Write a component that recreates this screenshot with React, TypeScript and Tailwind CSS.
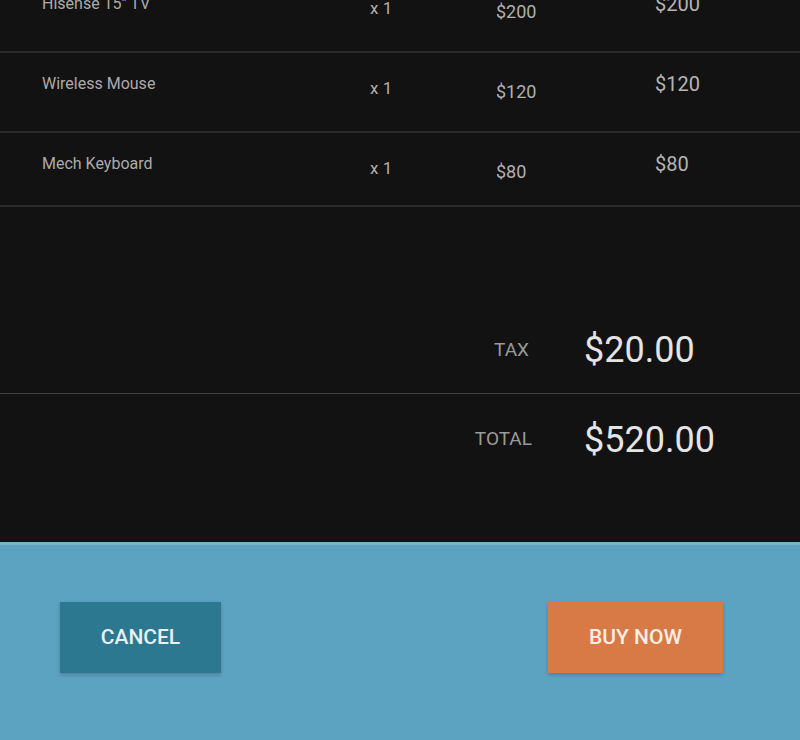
import React from "react";

const items = [
  { name: 'Hisense 15" TV', qty: "x 1", price: "$200", total: "$200", h: "h-[80px]" },
  { name: "Wireless Mouse", qty: "x 1", price: "$120", total: "$120", h: "h-[80px]" },
  { name: "Mech Keyboard", qty: "x 1", price: "$80", total: "$80", h: "h-[74px]" },
];

export default function App() {
  return (
    <div
      className="w-[800px] h-[740px] overflow-hidden flex flex-col bg-[#121212]"
      style={{ fontFamily: "Roboto, 'Noto Sans', sans-serif" }}
    >
      <div className="flex-1 flex flex-col">
        <div className="-mt-[27px] flex flex-col">
          {items.map((it) => (
            <div
              key={it.name}
              className={`flex items-start ${it.h} border-b-2 border-[#2a2a2a] shrink-0`}
            >
              <div className="w-[370px] pl-[42px] pt-[19px] text-[16px] leading-[24px] text-[#ababab]">
                {it.name}
              </div>
              <div className="w-[126px] pt-[23px] text-[17px] leading-[24px] text-[#b0b0b0]">
                {it.qty}
              </div>
              <div className="w-[159px] pt-[27px] text-[18px] leading-[24px] text-[#b0b0b0]">
                {it.price}
              </div>
              <div className="flex-1 pt-[17px] text-[20px] leading-[28px] text-[#b4b4b4]">
                {it.total}
              </div>
            </div>
          ))}
        </div>

        <div className="mt-[97px] h-[90px] flex items-center border-b border-[#404040] pt-[2px]">
          <div className="w-[529px] text-right text-[19px] text-[#9a9a9a] uppercase pt-[2px]">TAX</div>
          <div className="ml-[55px] text-[36px] leading-[44px] text-[#e4e4e4]">$20.00</div>
        </div>
        <div className="h-[88px] flex items-center pt-[3px]">
          <div className="w-[532px] text-right text-[19px] text-[#9a9a9a] uppercase">TOTAL</div>
          <div className="ml-[52px] text-[36px] leading-[44px] text-[#e4e4e4]">$520.00</div>
        </div>
      </div>

      <div className="h-[198px] shrink-0 bg-[#5ca3c2] border-t-[3px] border-[#79b3cd] flex items-start justify-between pt-[57px] pl-[60px] pr-[77px]">
        <button className="w-[161px] h-[71px] bg-[#2b7890] text-[#e8f1f5] text-[21px] font-medium uppercase shadow-[0_2px_4px_rgba(0,0,0,0.2)]">
          Cancel
        </button>
        <button className="w-[175px] h-[71px] bg-[#d77a46] text-[#fbeee6] text-[21px] font-medium uppercase shadow-[0_2px_4px_rgba(0,0,0,0.2)]">
          Buy Now
        </button>
      </div>
    </div>
  );
}
